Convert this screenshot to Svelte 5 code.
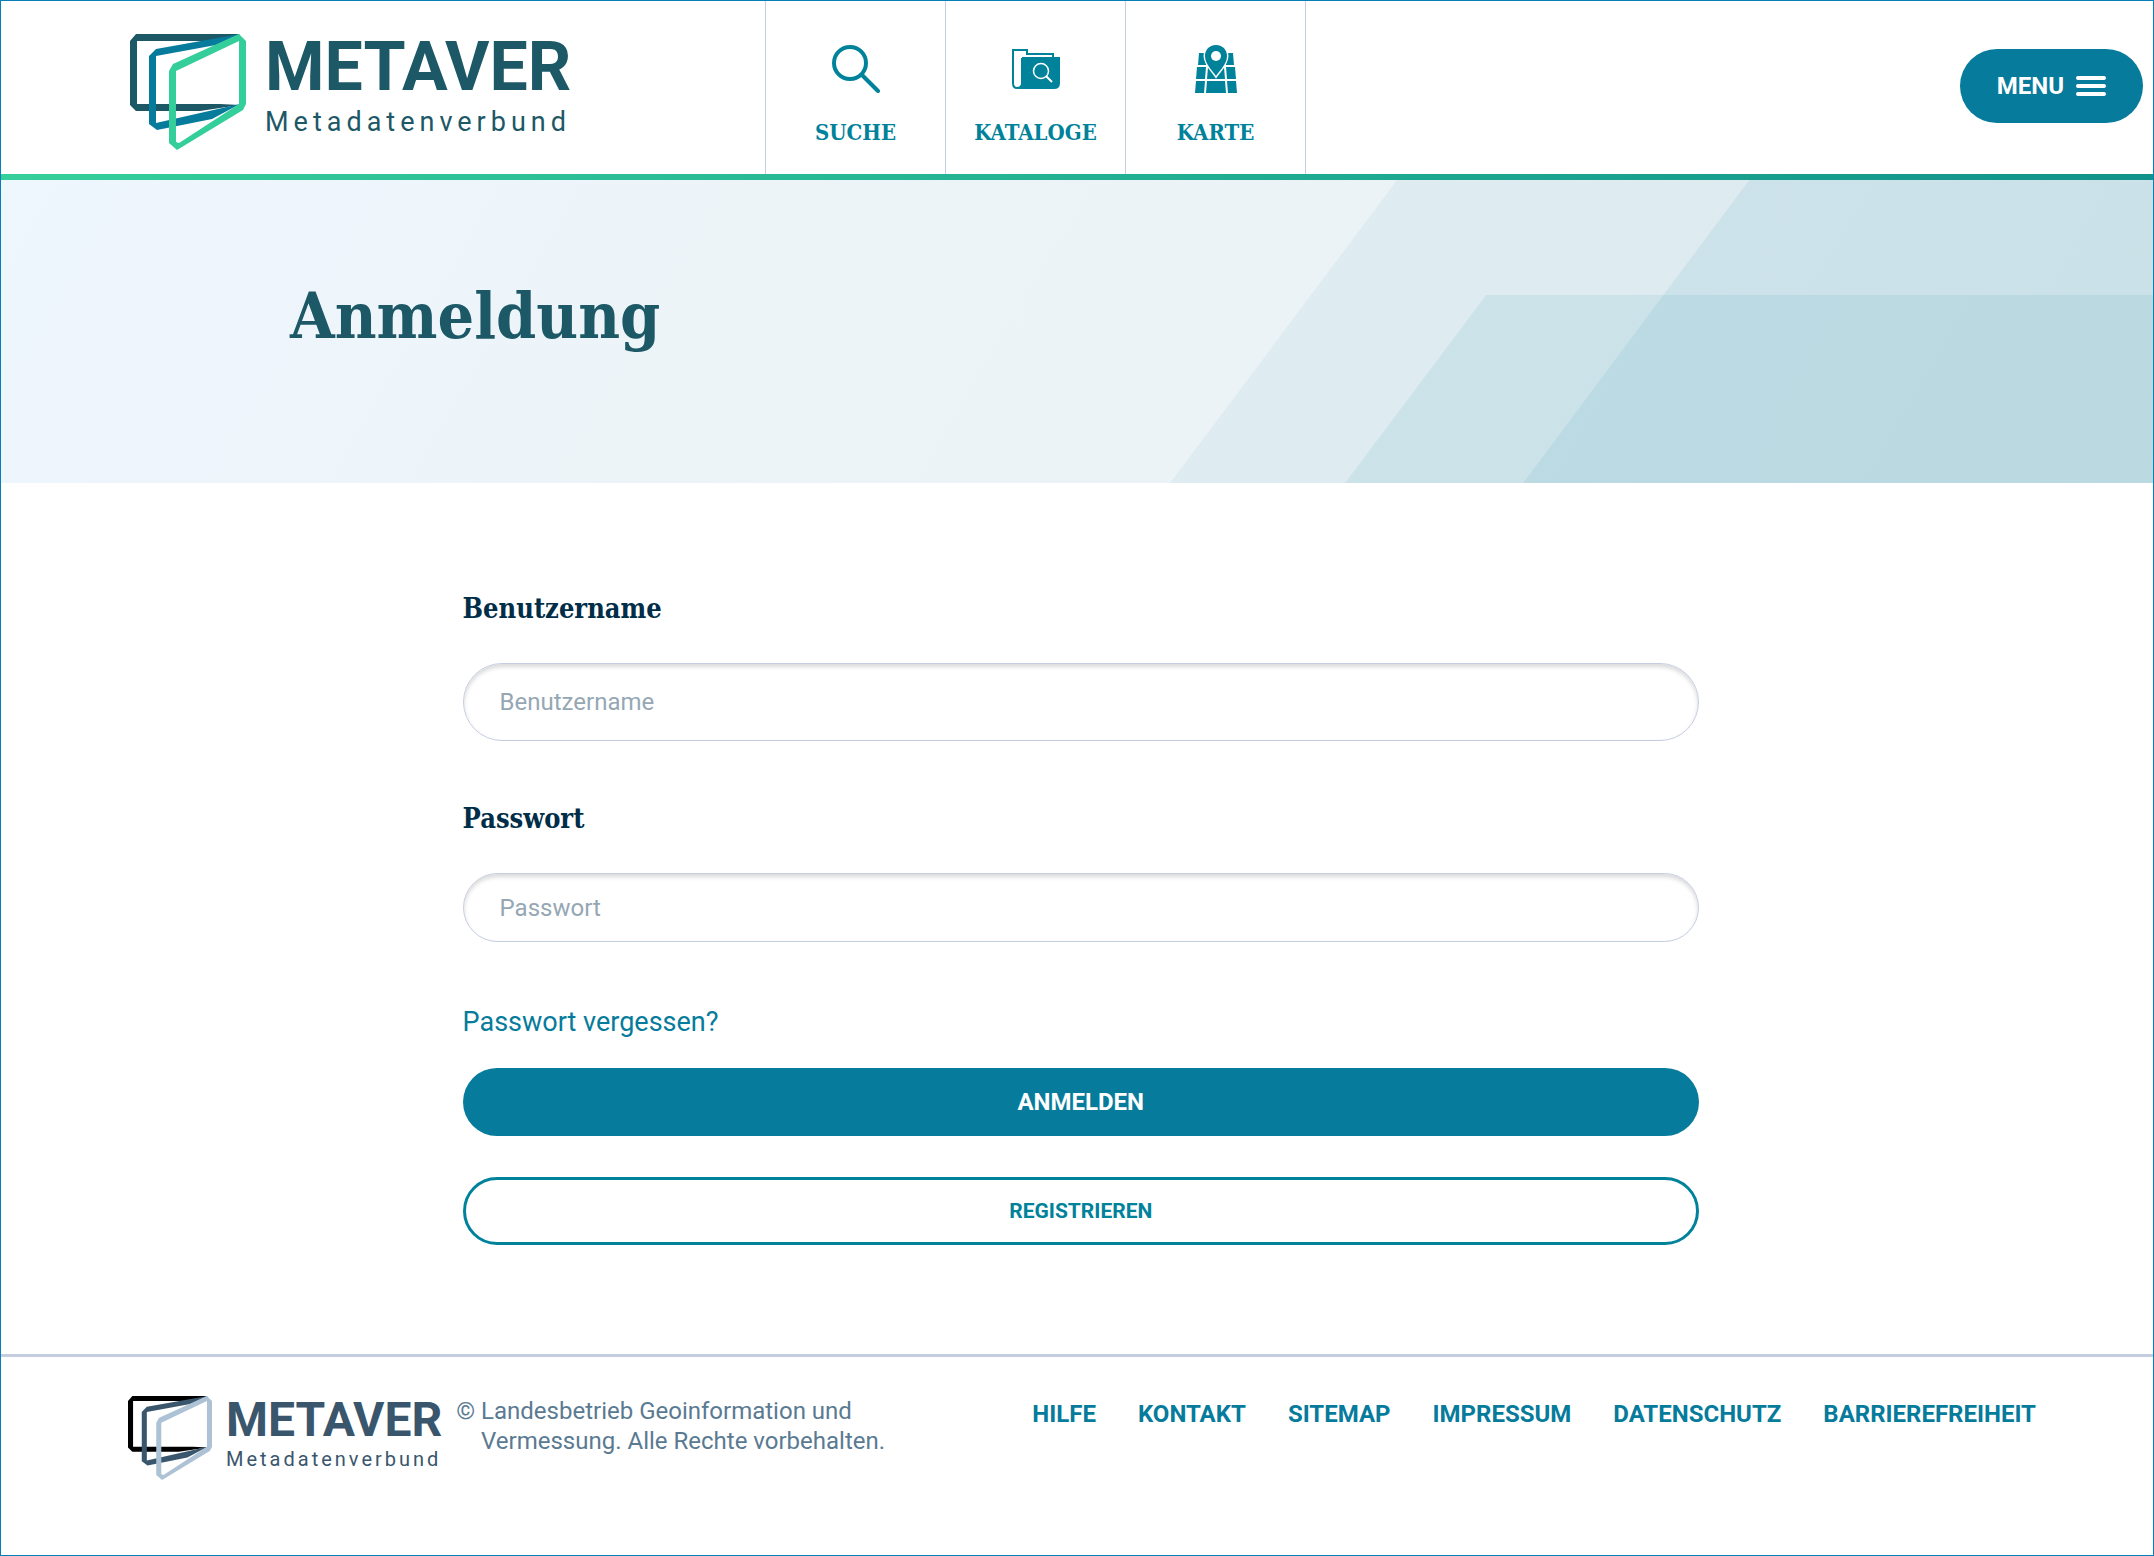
<script lang="ts">
  const nav = ['SUCHE', 'KATALOGE', 'KARTE'];
  const footerLinks = ['HILFE', 'KONTAKT', 'SITEMAP', 'IMPRESSUM', 'DATENSCHUTZ', 'BARRIEREFREIHEIT'];

  let username = '';
  let password = '';
</script>

<div class="page">
  <header class="header">
    <a href="#start" class="logo">
      <svg viewBox="0 0 116 116" aria-hidden="true">
        <path class="back" fill-rule="evenodd" d="M6 0H110L90 7H7V70H90L110 71L70 77H6L0 71V7Z" />
        <path class="mid" fill-rule="evenodd" d="M110 0 26 15 19 22V90L27 96 82 85 110 70 26 89V22L86 11Z" />
        <path class="front" fill-rule="evenodd" d="M109 0 116 7V70L113 76 47 116 39 109V37L43 30ZM109 7 46 37V108L49 109 109 70Z" />
      </svg>
      <span class="brand">
        <strong>METAVER</strong>
        <span>Metadatenverbund</span>
      </span>
    </a>

    <nav class="nav">
      {#each nav as item}
        <a href="#{item.toLowerCase()}">
          <svg viewBox="0 0 48 48" aria-hidden="true">
            {#if item === 'SUCHE'}
              <circle cx="18" cy="18" r="16" fill="none" stroke="currentColor" stroke-width="4" />
              <path d="M30 30 46 46" stroke="currentColor" stroke-width="4" stroke-linecap="round" />
            {:else if item === 'KATALOGE'}
              <path d="M10 13V39Q9 43 5 43Q1 43 1 38V5H15V9H41V13" fill="none" stroke="currentColor" stroke-width="2" />
              <path d="M10 12H48V38Q48 44 42 44H5Q10 43 10 38Z" fill="currentColor" />
              <circle cx="29" cy="26" r="7.500" fill="none" stroke="#fff" stroke-width="1.500" />
              <path d="M34 31 40 37" stroke="#fff" stroke-width="2" />
            {:else}
              <path d="M7 8H15L14 20H6ZM33 8H41L42 20H34ZM5 22H14L13 34H4ZM34 22H43L44 34H35ZM4 36H13L12 48H3ZM15 36H33L34 48H14ZM35 36H44L45 48H36ZM16 22H32L33 34H15Z" fill="currentColor" />
              <path d="M24 0C17 0 13 5 13 11C13 19 20 25 24 31C28 25 35 19 35 11C35 5 31 0 24 0Z" fill="currentColor" stroke="#fff" stroke-width="3" paint-order="stroke" />
              <circle cx="24" cy="11" r="5" fill="#fff" />
            {/if}
          </svg>
          {item}
        </a>
      {/each}
    </nav>

    <button type="button" class="menu">
      MENU
      <svg viewBox="0 0 30 20" aria-hidden="true">
        <path d="M2 2H28M2 10H28M2 18H28" stroke="currentColor" stroke-width="4" stroke-linecap="round" />
      </svg>
    </button>
  </header>

  <section class="hero">
    <svg class="shapes" viewBox="0 0 983 303" preserveAspectRatio="none" aria-hidden="true">
      <path d="M0 303 227 0H983V303Z" fill-opacity=".055" />
      <path d="M353 303 579 0H983V303Z" fill-opacity=".075" />
      <path d="M175 303 316 115H983V303Z" fill-opacity=".08" />
    </svg>
    <h1>Anmeldung</h1>
  </section>

  <main>
    <form on:submit|preventDefault>
      <label for="username">Benutzername</label>
      <input id="username" class="tall" bind:value={username} placeholder="Benutzername" />

      <label for="password">Passwort</label>
      <input id="password" type="password" bind:value={password} placeholder="Passwort" />

      <a href="#forgot">Passwort vergessen?</a>
      <button type="submit" class="primary">ANMELDEN</button>
      <button type="button" class="secondary">REGISTRIEREN</button>
    </form>
  </main>

  <footer>
    <a href="#start" class="logo small">
      <svg viewBox="0 0 116 116" aria-hidden="true">
        <path class="back" fill-rule="evenodd" d="M6 0H110L90 7H7V70H90L110 71L70 77H6L0 71V7Z" />
        <path class="mid" fill-rule="evenodd" d="M110 0 26 15 19 22V90L27 96 82 85 110 70 26 89V22L86 11Z" />
        <path class="front" fill-rule="evenodd" d="M109 0 116 7V70L113 76 47 116 39 109V37L43 30ZM109 7 46 37V108L49 109 109 70Z" />
      </svg>
      <span class="brand">
        <strong>METAVER</strong>
        <span>Metadatenverbund</span>
      </span>
    </a>
    <p class="copyright">
      <span>©</span>
      <span>Landesbetrieb Geoinformation und<br />Vermessung. Alle Rechte vorbehalten.</span>
    </p>
    <nav class="links">
      {#each footerLinks as link}
        <a href="#{link.toLowerCase()}">{link}</a>
      {/each}
    </nav>
  </footer>
</div>

<style>
  .page {
    --teal: #067b9c;
    --petrol: #1d5867;
    --line: #c5cde1;
    --slab: 'Roboto Slab', 'DejaVu Serif Condensed', 'DejaVu Serif', serif;
    box-sizing: border-box;
    min-height: 100vh;
    border: 1px solid #067fb8;
    background: #fff;
    font-family: Roboto, sans-serif;
    font-size: 24px;
    display: flex;
    flex-direction: column;
  }
  a { color: var(--teal); text-decoration: none; }
  button { font: inherit; font-weight: 700; cursor: pointer; }

  .header {
    display: grid;
    grid-template-columns: 764px 1fr auto;
    align-items: start;
    height: 173px;
    border-bottom: 6px solid;
    border-image: linear-gradient(90deg, #36cf9b, #10938a) 1;
  }
  .logo { display: flex; align-items: flex-start; gap: 19px; padding: 33px 0 0 129px; }
  .logo svg { width: 116px; height: 116px; }
  .brand { display: grid; margin-top: -6px; color: var(--petrol); }
  .brand strong { font-size: 68px; line-height: 78px; }
  .brand span { font-size: 27px; line-height: 32px; letter-spacing: 5px; }
  .back { fill: #1d5867; }
  .mid { fill: #067b9c; }
  .front { fill: #34ce9a; }

  .nav { display: flex; align-self: stretch; border-left: 1px solid var(--line); }
  .nav a {
    box-sizing: border-box;
    width: 180px;
    border-right: 1px solid var(--line);
    padding-top: 44px;
    display: flex;
    flex-direction: column;
    align-items: center;
    gap: 23px;
    color: #00829b;
    font: 700 22px/32px var(--slab);
  }
  .nav svg { width: 48px; height: 48px; }

  .menu {
    display: flex;
    align-items: center;
    gap: 12px;
    height: 74px;
    margin: 48px 10px 0 0;
    padding: 0 37px;
    border: 0;
    border-radius: 37px;
    background: var(--teal);
    color: #fff;
  }
  .menu svg { width: 30px; height: 20px; fill: none; }

  .hero {
    position: relative;
    height: 303px;
    background: linear-gradient(120deg, #eef6fe, #edf4f8 35%, #e9f1f3);
  }
  .shapes { position: absolute; top: 0; right: 0; width: 45.7%; height: 100%; fill: var(--teal); }
  h1 {
    position: relative;
    margin: 0;
    padding: 92px 0 0 289px;
    color: var(--petrol);
    font: 700 64px/88px var(--slab);
  }

  main { padding: 108px 21.1% 109px 21.45%; }
  form { display: flex; flex-direction: column; }
  label { margin-bottom: 36px; color: #002d47; font: 700 27px/36px var(--slab); }
  input {
    height: 69px;
    box-sizing: border-box;
    margin-bottom: 60px;
    padding: 0 36px;
    border: 1px solid var(--line);
    border-radius: 40px;
    box-shadow: inset 0 3px 4px #00000026;
    font: inherit;
  }
  input.tall { height: 78px; }
  input::placeholder { color: #96a7b4; opacity: 1; }
  form a { font-size: 27px; line-height: 36px; margin: 2px 0 28px; align-self: flex-start; }
  .primary, .secondary { height: 68px; border-radius: 34px; }
  .primary { border: 0; background: var(--teal); color: #fff; margin-bottom: 41px; }
  .secondary { border: 3px solid #00829b; background: #fff; color: #00829b; font-size: 21px; }

  footer {
    display: flex;
    align-items: flex-start;
    border-top: 3px solid var(--line);
    padding: 39px 117px 0 127px;
  }
  .small { padding: 0; gap: 14px; }
  .small svg { width: 84px; height: 84px; }
  .small .brand { margin-top: -4px; color: #3a566d; }
  .small .brand strong { font-size: 48px; line-height: 55px; }
  .small .brand span { font-size: 20px; line-height: 24px; letter-spacing: 3px; }
  .small .back { fill: #000; }
  .small .mid { fill: #3a566d; }
  .small .front { fill: #adc2d5; }
  .copyright { display: flex; gap: 6px; margin: 0 0 0 14px; color: #5a7a92; line-height: 30px; }
  .links { display: flex; gap: 42px; margin-left: auto; font-weight: 700; line-height: 36px; }
</style>
